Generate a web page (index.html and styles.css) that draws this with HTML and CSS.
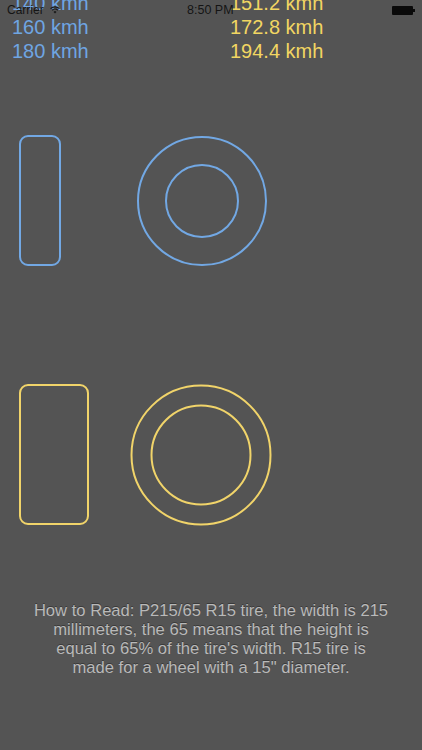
FILE: index.html
```html
<!DOCTYPE html>
<html>
<head>
<meta charset="utf-8">
<link rel="stylesheet" href="styles.css">
</head>
<body>
<div class="status">
  <span class="carrier">Carrier</span>
  <svg class="wifi" width="10" height="8" viewBox="0 0 10 8">
    <path d="M0.5 2.6 A6.5 6.5 0 0 1 9.5 2.6" fill="none" stroke="#1a1a1a" stroke-width="1.3"/>
    <path d="M2.2 4.3 A4 4 0 0 1 7.8 4.3" fill="none" stroke="#1a1a1a" stroke-width="1.3"/>
    <path d="M5 7.6 L3.5 5.9 A2 2 0 0 1 6.5 5.9 Z" fill="#1a1a1a"/>
  </svg>
  <span class="time">8:50 PM</span>
  <span class="battery"><span class="cell"></span><span class="tip"></span></span>
</div>

<div class="speeds">
  <div class="row"><span class="kmh blue">140 kmh</span><span class="kmh yellow">151.2 kmh</span></div>
  <div class="row"><span class="kmh blue">160 kmh</span><span class="kmh yellow">172.8 kmh</span></div>
  <div class="row"><span class="kmh blue">180 kmh</span><span class="kmh yellow">194.4 kmh</span></div>
</div>

<div class="tire tire-blue">
  <div class="side"></div>
  <svg class="rings" width="132" height="132" viewBox="0 0 132 132">
    <circle cx="66" cy="66" r="64" fill="none" stroke="#72a8e4" stroke-width="2"/>
    <circle cx="66" cy="66" r="36" fill="none" stroke="#72a8e4" stroke-width="2"/>
  </svg>
</div>

<div class="tire tire-yellow">
  <div class="side"></div>
  <svg class="rings" width="142" height="142" viewBox="0 0 142 142">
    <circle cx="71" cy="71" r="69.5" fill="none" stroke="#f1d46a" stroke-width="2"/>
    <circle cx="71" cy="71" r="49.5" fill="none" stroke="#f1d46a" stroke-width="2"/>
  </svg>
</div>

<p class="howto">How to Read: P215/65 R15 tire, the width is 215<br>millimeters, the 65 means that the height is<br>equal to 65% of the tire's width. R15 tire is<br>made for a wheel with a 15" diameter.</p>
</body>
</html>
```

FILE: styles.css
```css
html, body {
  margin: 0;
  padding: 0;
}
body {
  width: 422px;
  height: 750px;
  overflow: hidden;
  background: #545454;
  font-family: "Liberation Sans", Arial, sans-serif;
  position: relative;
}
.status {
  position: absolute;
  left: 0;
  top: 0;
  width: 422px;
  height: 20px;
  z-index: 2;
  font-size: 12px;
  color: #141414;
}
.carrier {
  position: absolute;
  left: 7px;
  top: 3px;
}
.wifi {
  position: absolute;
  left: 50px;
  top: 6px;
}
.time {
  position: absolute;
  left: 187px;
  top: 3px;
  font-size: 12.5px;
}
.battery {
  position: absolute;
  left: 392px;
  top: 6px;
  display: flex;
  align-items: center;
}
.battery .cell {
  width: 21px;
  height: 9px;
  background: #0a0a0a;
  border-radius: 1px;
}
.battery .tip {
  width: 1.5px;
  height: 3px;
  background: #0a0a0a;
}
.speeds {
  margin-top: -9px;
}
.row {
  display: grid;
  grid-template-columns: 218px 1fr;
  padding-left: 12px;
  height: 24px;
  line-height: 24px;
  font-size: 20px;
}
.blue { color: #6fa5e3; }
.yellow { color: #f2d662; }
.tire {
  display: flex;
  align-items: flex-start;
  padding-left: 19px;
}
.tire-blue {
  margin-top: 72px;
}
.tire-blue .side {
  width: 38px;
  height: 127px;
  border: 2px solid #72a8e4;
  border-radius: 9px;
}
.tire-blue .rings {
  margin-left: 75px;
}
.tire-yellow {
  margin-top: 117px;
}
.tire-yellow .side {
  width: 66px;
  height: 137px;
  border: 2px solid #f1d46a;
  border-radius: 9px;
}
.tire-yellow .rings {
  margin-left: 41px;
}
.howto {
  margin: 75px 0 0;
  padding: 0 10px;
  text-align: center;
  font-size: 16.6px;
  line-height: 19px;
  color: #b9b9b9;
  text-shadow: 0 -1px 0 #3a3a3a;
}
```
